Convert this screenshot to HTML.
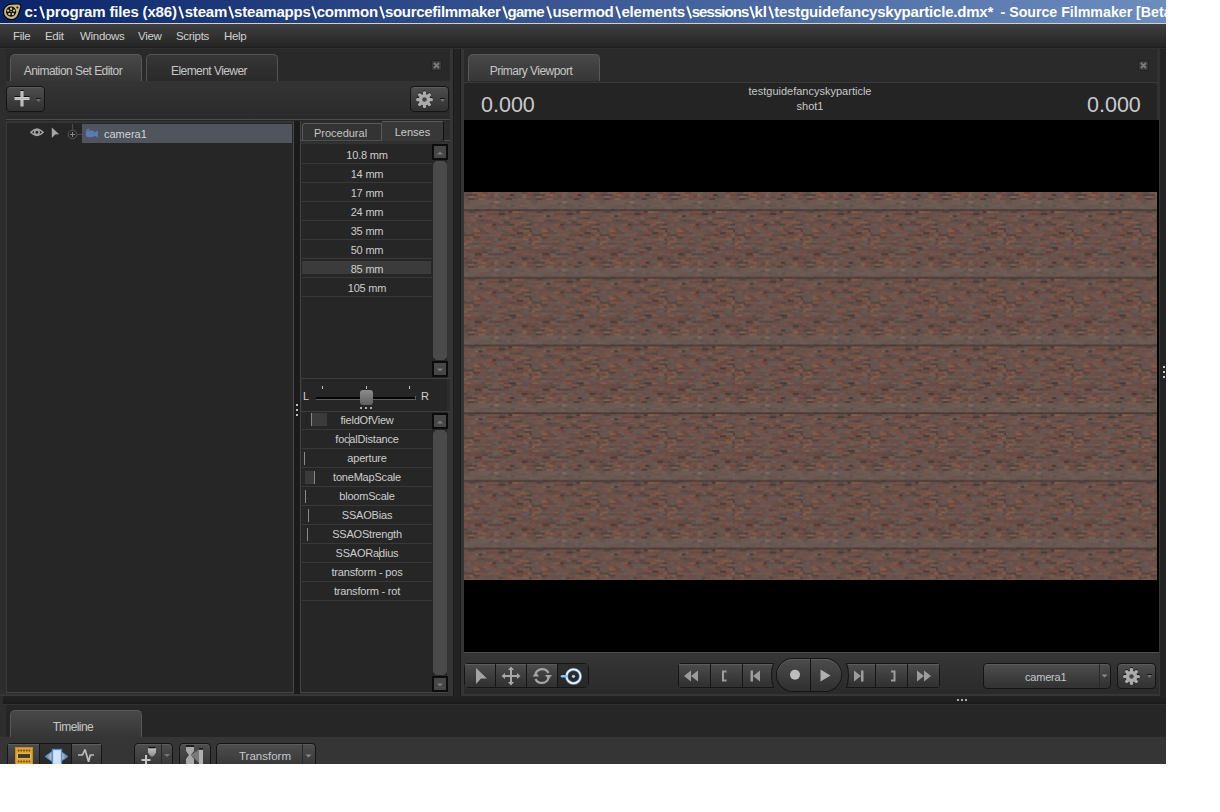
<!DOCTYPE html>
<html><head><meta charset="utf-8"><style>
*{margin:0;padding:0;box-sizing:border-box}
html,body{width:1220px;height:812px;background:#fff;overflow:hidden}
body{font-family:"Liberation Sans",sans-serif;font-size:11px;color:#c8c8c8;position:relative}
.a{position:absolute}
svg.a{overflow:visible}
#app{left:0;top:0;width:1166px;height:764px;background:#2d2d2d;overflow:hidden}
.tab{position:absolute;border-radius:5px 5px 0 0;background:linear-gradient(#484848,#363636);border:1px solid #585858;border-bottom:none;text-align:center;color:#c6c6c6;font-size:12px;letter-spacing:-0.55px;padding-top:3px;padding-right:6px}
.tab.in{background:linear-gradient(#363636,#292929);border-color:#535353}
.btn{position:absolute;border-radius:4px;background:linear-gradient(#4e4e4e,#333 90%);border:1px solid #141414;box-shadow:inset 0 1px 0 #5c5c5c}
.seg{position:absolute;background:linear-gradient(#4c4c4c,#323232 90%);box-shadow:inset 0 1px 0 #5c5c5c}
.seg.on{background:linear-gradient(#2e2e2e,#272727);box-shadow:none}
.xbtn{position:absolute;width:11px;height:11px;background:#393939;border:1px solid #222;border-radius:2px}
.sbbtn{position:absolute;width:16px;height:16px;background:#474747;border:2px solid #0c0c0c}
.thumb{position:absolute;background:#4a4a4a;clip-path:polygon(3px 0,calc(100% - 3px) 0,100% 3px,100% calc(100% - 3px),calc(100% - 3px) 100%,3px 100%,0 calc(100% - 3px),0 3px)}
.row{position:absolute;width:130px;height:19px;border-bottom:1px solid #383838;text-align:center;color:#cdcdcd;letter-spacing:-0.2px}
</style></head><body>
<div id="app" class="a">
<div class="a" style="left:0px;top:0px;width:1166px;height:23px;background:linear-gradient(to right,#0a246a 0px,#a6caf0 1840px)"></div>
<svg class="a" style="left:0px;top:0px" width="24" height="23" viewBox="0 0 24 23"><path d="M11 4.8 L18 4.6 Q20.8 4.6 20.2 7.2 L17.8 14.4 A7.1 7.1 0 1 1 11 4.8Z" fill="#000" stroke="#000" stroke-width="2.2" stroke-linejoin="round"/>
<path d="M11 4.8 L18 4.6 Q20.8 4.6 20.2 7.2 L17.8 14.4 A7.1 7.1 0 1 1 11 4.8Z" fill="#c9b57e"/>
<circle cx="11.1" cy="11.6" r="5.1" fill="#0c0c0c"/>
<g fill="#d8c488"><circle cx="11.1" cy="8.7" r="1.2"/><circle cx="8.1" cy="10.6" r="1.2"/><circle cx="14.1" cy="10.6" r="1.2"/><circle cx="9.4" cy="14" r="1.2"/><circle cx="12.9" cy="14" r="1.2"/><circle cx="11.1" cy="11.5" r="0.7"/></g>
<circle cx="17.4" cy="7.4" r="1" fill="#111"/></svg>
<div class="a" style="left:24.4px;top:3px;white-space:nowrap;font-weight:bold;font-size:15px;color:#fff;line-height:18px;letter-spacing:0.00px">c:</div>
<svg class="a" style="left:38.7px;top:0px" width="7" height="23" viewBox="0 0 7 23"><path d="M1.2 6.4 L5.2 18.4" stroke="#fff" stroke-width="1.9"/></svg>
<div class="a" style="left:45.8px;top:3px;white-space:nowrap;font-weight:bold;font-size:15px;color:#fff;line-height:18px;letter-spacing:-0.17px">program files (x86)</div>
<svg class="a" style="left:178.3px;top:0px" width="7" height="23" viewBox="0 0 7 23"><path d="M1.2 6.4 L5.2 18.4" stroke="#fff" stroke-width="1.9"/></svg>
<div class="a" style="left:184.7px;top:3px;white-space:nowrap;font-weight:bold;font-size:15px;color:#fff;line-height:18px;letter-spacing:-0.17px">steam</div>
<svg class="a" style="left:228.3px;top:0px" width="7" height="23" viewBox="0 0 7 23"><path d="M1.2 6.4 L5.2 18.4" stroke="#fff" stroke-width="1.9"/></svg>
<div class="a" style="left:234.1px;top:3px;white-space:nowrap;font-weight:bold;font-size:15px;color:#fff;line-height:18px;letter-spacing:-0.21px">steamapps</div>
<svg class="a" style="left:311.2px;top:0px" width="7" height="23" viewBox="0 0 7 23"><path d="M1.2 6.4 L5.2 18.4" stroke="#fff" stroke-width="1.9"/></svg>
<div class="a" style="left:316.7px;top:3px;white-space:nowrap;font-weight:bold;font-size:15px;color:#fff;line-height:18px;letter-spacing:-0.22px">common</div>
<svg class="a" style="left:379.0px;top:0px" width="7" height="23" viewBox="0 0 7 23"><path d="M1.2 6.4 L5.2 18.4" stroke="#fff" stroke-width="1.9"/></svg>
<div class="a" style="left:384.9px;top:3px;white-space:nowrap;font-weight:bold;font-size:15px;color:#fff;line-height:18px;letter-spacing:-0.29px">sourcefilmmaker</div>
<svg class="a" style="left:501.6px;top:0px" width="7" height="23" viewBox="0 0 7 23"><path d="M1.2 6.4 L5.2 18.4" stroke="#fff" stroke-width="1.9"/></svg>
<div class="a" style="left:507.4px;top:3px;white-space:nowrap;font-weight:bold;font-size:15px;color:#fff;line-height:18px;letter-spacing:-0.67px">game</div>
<svg class="a" style="left:545.9px;top:0px" width="7" height="23" viewBox="0 0 7 23"><path d="M1.2 6.4 L5.2 18.4" stroke="#fff" stroke-width="1.9"/></svg>
<div class="a" style="left:552.6px;top:3px;white-space:nowrap;font-weight:bold;font-size:15px;color:#fff;line-height:18px;letter-spacing:-0.39px">usermod</div>
<svg class="a" style="left:614.9px;top:0px" width="7" height="23" viewBox="0 0 7 23"><path d="M1.2 6.4 L5.2 18.4" stroke="#fff" stroke-width="1.9"/></svg>
<div class="a" style="left:621.4px;top:3px;white-space:nowrap;font-weight:bold;font-size:15px;color:#fff;line-height:18px;letter-spacing:-0.18px">elements</div>
<svg class="a" style="left:685.9px;top:0px" width="7" height="23" viewBox="0 0 7 23"><path d="M1.2 6.4 L5.2 18.4" stroke="#fff" stroke-width="1.9"/></svg>
<div class="a" style="left:691.7px;top:3px;white-space:nowrap;font-weight:bold;font-size:15px;color:#fff;line-height:18px;letter-spacing:-0.93px">sessions</div>
<svg class="a" style="left:749.1px;top:0px" width="7" height="23" viewBox="0 0 7 23"><path d="M1.2 6.4 L5.2 18.4" stroke="#fff" stroke-width="1.9"/></svg>
<div class="a" style="left:754.6px;top:3px;white-space:nowrap;font-weight:bold;font-size:15px;color:#fff;line-height:18px;letter-spacing:-0.26px">kl</div>
<svg class="a" style="left:768.1px;top:0px" width="7" height="23" viewBox="0 0 7 23"><path d="M1.2 6.4 L5.2 18.4" stroke="#fff" stroke-width="1.9"/></svg>
<div class="a" style="left:774.3px;top:3px;white-space:nowrap;font-weight:bold;font-size:15px;color:#fff;line-height:18px;letter-spacing:-0.21px">testguidefancyskyparticle.dmx*</div>
<div class="a" style="left:1000.5px;top:3px;white-space:nowrap;font-weight:bold;font-size:14.2px;color:#fff;line-height:18px">- Source Filmmaker [Beta]</div>
<div class="a" style="left:0px;top:23px;width:1166px;height:1px;background:#d4d0c8"></div>
<div class="a" style="left:0px;top:24px;width:1166px;height:23px;background:linear-gradient(#404040,#242424)"></div>
<div class="a" style="left:13px;top:29px;white-space:nowrap;color:#d0d0d0;font-size:11.5px;line-height:14px;letter-spacing:-0.3px">File</div>
<div class="a" style="left:45px;top:29px;white-space:nowrap;color:#d0d0d0;font-size:11.5px;line-height:14px;letter-spacing:-0.3px">Edit</div>
<div class="a" style="left:80px;top:29px;white-space:nowrap;color:#d0d0d0;font-size:11.5px;line-height:14px;letter-spacing:-0.3px">Windows</div>
<div class="a" style="left:138px;top:29px;white-space:nowrap;color:#d0d0d0;font-size:11.5px;line-height:14px;letter-spacing:-0.3px">View</div>
<div class="a" style="left:176px;top:29px;white-space:nowrap;color:#d0d0d0;font-size:11.5px;line-height:14px;letter-spacing:-0.3px">Scripts</div>
<div class="a" style="left:224px;top:29px;white-space:nowrap;color:#d0d0d0;font-size:11.5px;line-height:14px;letter-spacing:-0.3px">Help</div>
<div class="a" style="left:0px;top:47px;width:1166px;height:1px;background:#1d1d1d"></div>
<div class="a" style="left:0px;top:48px;width:1166px;height:1px;background:#303030"></div>
<div class="a" style="left:0px;top:49px;width:6px;height:647px;background:#2d2d2d"></div>
<div class="a" style="left:6px;top:49px;width:444px;height:32px;background:#292929"></div>
<div class="tab" style="left:10px;top:54px;width:132px;height:27px;line-height:27px">Animation Set Editor</div>
<div class="tab in" style="left:146px;top:54px;width:132px;height:27px;line-height:27px">Element Viewer</div>
<div class="xbtn" style="left:431px;top:60px"></div>
<svg class="a" style="left:431px;top:60px" width="11" height="11" viewBox="0 0 11 11"><path d="M3 3L8 8M8 3L3 8" stroke="#7c7c7c" stroke-width="1.8"/></svg>
<div class="a" style="left:6px;top:81px;width:444px;height:38px;background:linear-gradient(#343434,#2a2a2a)"></div>
<div class="btn" style="left:6px;top:86px;width:39px;height:26px"></div>
<svg class="a" style="left:13.5px;top:90px" width="16" height="17" viewBox="0 0 16 17"><defs><linearGradient id="pg" x1="0" y1="0" x2="1" y2="0"><stop offset="0" stop-color="#d8d8d8"/><stop offset="0.5" stop-color="#b0b0b0"/><stop offset="1" stop-color="#d0d0d0"/></linearGradient><linearGradient id="pg2" x1="0" y1="0" x2="0" y2="1"><stop offset="0" stop-color="#dcdcdc"/><stop offset="0.5" stop-color="#b4b4b4"/><stop offset="1" stop-color="#d4d4d4"/></linearGradient></defs><rect x="6.5" y="0" width="3" height="1" fill="#111"/><rect x="0.5" y="6" width="15" height="1" fill="#111"/><rect x="6.5" y="1" width="3" height="15.5" fill="url(#pg)"/><rect x="0.5" y="7" width="15" height="3" fill="url(#pg2)"/></svg>
<svg class="a" style="left:36px;top:97.5px" width="6" height="5" viewBox="0 0 6 5"><path d="M0 0.5H5" stroke="#151515" stroke-width="1"/><path d="M0 1H5L2.5 4Z" fill="#707070"/></svg>
<div class="btn" style="left:410px;top:86px;width:39px;height:26px"></div>
<svg class="a" style="left:410px;top:86px" width="39" height="26" viewBox="0 0 39 26"><circle cx="14.5" cy="12.799999999999999" r="5.71" fill="#141414"/><rect x="12.90" y="4.40" width="3.2" height="8.40" rx="1.3" fill="#141414" transform="rotate(0 14.5 12.799999999999999)"/><rect x="12.90" y="4.40" width="3.2" height="8.40" rx="1.3" fill="#141414" transform="rotate(45 14.5 12.799999999999999)"/><rect x="12.90" y="4.40" width="3.2" height="8.40" rx="1.3" fill="#141414" transform="rotate(90 14.5 12.799999999999999)"/><rect x="12.90" y="4.40" width="3.2" height="8.40" rx="1.3" fill="#141414" transform="rotate(135 14.5 12.799999999999999)"/><rect x="12.90" y="4.40" width="3.2" height="8.40" rx="1.3" fill="#141414" transform="rotate(180 14.5 12.799999999999999)"/><rect x="12.90" y="4.40" width="3.2" height="8.40" rx="1.3" fill="#141414" transform="rotate(225 14.5 12.799999999999999)"/><rect x="12.90" y="4.40" width="3.2" height="8.40" rx="1.3" fill="#141414" transform="rotate(270 14.5 12.799999999999999)"/><rect x="12.90" y="4.40" width="3.2" height="8.40" rx="1.3" fill="#141414" transform="rotate(315 14.5 12.799999999999999)"/><circle cx="14.5" cy="13.6" r="5.71" fill="#acacac"/><rect x="12.90" y="5.20" width="3.2" height="8.40" rx="1.3" fill="#acacac" transform="rotate(0 14.5 13.6)"/><rect x="12.90" y="5.20" width="3.2" height="8.40" rx="1.3" fill="#acacac" transform="rotate(45 14.5 13.6)"/><rect x="12.90" y="5.20" width="3.2" height="8.40" rx="1.3" fill="#acacac" transform="rotate(90 14.5 13.6)"/><rect x="12.90" y="5.20" width="3.2" height="8.40" rx="1.3" fill="#acacac" transform="rotate(135 14.5 13.6)"/><rect x="12.90" y="5.20" width="3.2" height="8.40" rx="1.3" fill="#acacac" transform="rotate(180 14.5 13.6)"/><rect x="12.90" y="5.20" width="3.2" height="8.40" rx="1.3" fill="#acacac" transform="rotate(225 14.5 13.6)"/><rect x="12.90" y="5.20" width="3.2" height="8.40" rx="1.3" fill="#acacac" transform="rotate(270 14.5 13.6)"/><rect x="12.90" y="5.20" width="3.2" height="8.40" rx="1.3" fill="#acacac" transform="rotate(315 14.5 13.6)"/><circle cx="14.5" cy="13.6" r="2.27" fill="#454545"/><path d="M30 12.5H35" stroke="#151515" stroke-width="1"/><path d="M30 13H35L32.5 16Z" fill="#707070"/></svg>
<div class="a" style="left:6px;top:119px;width:444px;height:1px;background:#4c4c4c"></div>
<div class="a" style="left:6px;top:120px;width:444px;height:1px;background:#262626"></div>
<div class="a" style="left:6px;top:121px;width:288px;height:575px;background:#2c2c2c"></div>
<div class="a" style="left:6px;top:121px;width:288px;height:572px;background:#262626;border-left:1px solid #3a3a3a;border-top:2px solid #343434;border-right:1px solid #464646;border-bottom:1px solid #454545"></div>
<div class="a" style="left:82px;top:124px;width:210px;height:19px;background:#4f545d"></div>
<div class="a" style="left:104px;top:127px;white-space:nowrap;color:#cfd3da;line-height:14px">camera1</div>
<svg class="a" style="left:30px;top:127px" width="14" height="11" viewBox="0 0 14 11"><path d="M0.9 5.3 Q7 -1.3 13.1 5.3 Q7 11.9 0.9 5.3Z" fill="none" stroke="#a6a6a6" stroke-width="1.5"/><circle cx="6.9" cy="5.3" r="2.3" fill="none" stroke="#a6a6a6" stroke-width="1.6"/></svg>
<svg class="a" style="left:51px;top:127px" width="10" height="12" viewBox="0 0 10 12"><path d="M0.8 0.6 L8.2 7.2 L4.2 7.5 L0.8 11Z" fill="#a4a4a4"/></svg>
<svg class="a" style="left:66px;top:123px" width="18" height="18" viewBox="0 0 18 18"><path d="M6.5 1V7M11 11.5H16" stroke="#4a4a4a" stroke-width="1"/><circle cx="6.5" cy="11.5" r="4.3" fill="none" stroke="#585858" stroke-width="1"/><path d="M6.5 9V14M4 11.5H9" stroke="#8a8a8a" stroke-width="1"/></svg>
<svg class="a" style="left:85px;top:128px" width="14" height="10" viewBox="0 0 14 10"><rect x="0.8" y="2.4" width="8.6" height="6.8" rx="2.6" fill="#5b79b4"/><path d="M8.6 4.8 L13 2.6 V9.4 L8.6 7.4Z" fill="#5b79b4"/><path d="M1.8 3.2 Q1.6 0.6 4.6 1.3" fill="none" stroke="#5b79b4" stroke-width="1.2"/></svg>
<div class="a" style="left:294px;top:121px;width:6px;height:575px;background:#1b1b1b"></div>
<div class="a" style="left:300px;top:121px;width:150px;height:575px;background:#2d2d2d"></div>
<div class="a" style="left:300px;top:121px;width:1px;height:575px;background:#444"></div>
<div class="a" style="left:302px;top:123px;width:80px;height:18px;background:#333;border:1px solid #595959;border-bottom:none;border-radius:3px 0 0 0;color:#c4c4c4;text-align:center;line-height:19px;padding-right:3px">Procedural</div>
<div class="a" style="left:382px;top:121px;width:62px;height:20px;background:#383838;border-top:1px solid #5a5a5a;border-right:1px solid #111;border-radius:0 3px 0 0;color:#cacaca;text-align:center;line-height:20px">Lenses</div>
<div class="a" style="left:300px;top:140px;width:82px;height:1px;background:#505050"></div>
<div class="a" style="left:444px;top:140px;width:6px;height:1px;background:#505050"></div>
<div class="a" style="left:300px;top:142px;width:150px;height:237px;background:#262626;border-left:1px solid #444;border-top:2px solid #323232;border-right:3px solid #343434"></div>
<div class="a" style="left:302px;top:261px;width:129px;height:13px;background:#3b3b3b"></div>
<div class="row" style="left:302px;top:145px;line-height:21px">10.8 mm</div>
<div class="row" style="left:302px;top:164px;line-height:21px">14 mm</div>
<div class="row" style="left:302px;top:183px;line-height:21px">17 mm</div>
<div class="row" style="left:302px;top:202px;line-height:21px">24 mm</div>
<div class="row" style="left:302px;top:221px;line-height:21px">35 mm</div>
<div class="row" style="left:302px;top:240px;line-height:21px">50 mm</div>
<div class="row" style="left:302px;top:259px;line-height:21px">85 mm</div>
<div class="row" style="left:302px;top:278px;line-height:21px">105 mm</div>
<div class="sbbtn" style="left:432px;top:144px"></div>
<svg class="a" style="left:434px;top:146px" width="12" height="12" viewBox="0 0 12 12"><path d="M3 8.5 L6 5.5 L9 8.5Z" fill="#7c7c7c"/></svg>
<div class="thumb" style="left:433px;top:161px;width:14px;height:199px"></div>
<div class="sbbtn" style="left:432px;top:361px"></div>
<svg class="a" style="left:434px;top:363px" width="12" height="12" viewBox="0 0 12 12"><path d="M3 5.5 L6 8.5 L9 5.5Z" fill="#7c7c7c"/></svg>
<div class="a" style="left:300px;top:378px;width:150px;height:1px;background:#3d3d3d"></div>
<div class="a" style="left:302px;top:379px;width:145px;height:32px;background:#262626"></div>
<div class="a" style="left:303px;top:389px;white-space:nowrap;color:#cfcfcf;line-height:14px">L</div>
<div class="a" style="left:421px;top:389px;white-space:nowrap;color:#cfcfcf;line-height:14px">R</div>
<div class="a" style="left:316px;top:397px;width:100px;height:2px;background:#050505"></div>
<div class="a" style="left:316px;top:399px;width:100px;height:1px;background:#5c5c5c"></div>
<div class="a" style="left:415px;top:396px;width:1px;height:4px;background:#5c5c5c"></div>
<div class="a" style="left:322px;top:386px;width:1px;height:3px;background:#c0c0c0"></div>
<div class="a" style="left:366px;top:386px;width:1px;height:3px;background:#c0c0c0"></div>
<div class="a" style="left:409px;top:386px;width:1px;height:3px;background:#c0c0c0"></div>
<div class="a" style="left:360px;top:390px;width:13px;height:15px;border-radius:3px;background:linear-gradient(#8c8c8c,#5f5f5f)"></div>
<div class="a" style="left:360px;top:407px;width:2px;height:2px;background:#aaa;box-shadow:5px 0 0 #aaa,10px 0 0 #aaa"></div>
<div class="a" style="left:296px;top:404px;width:2px;height:2px;background:#bcbcbc;box-shadow:0 5px 0 #bcbcbc,0 10px 0 #bcbcbc"></div>
<div class="a" style="left:456px;top:365px;width:2px;height:2px;background:#bcbcbc;box-shadow:0 5px 0 #bcbcbc,0 10px 0 #bcbcbc"></div>
<div class="a" style="left:300px;top:411px;width:150px;height:1px;background:#3d3d3d"></div>
<div class="a" style="left:300px;top:412px;width:150px;height:284px;background:#2c2c2c"></div>
<div class="a" style="left:300px;top:412px;width:150px;height:281px;background:#262626;border-left:1px solid #444;border-right:3px solid #343434;border-bottom:1px solid #454545"></div>
<div class="a" style="left:312px;top:413px;width:15px;height:13px;background:#3b3b3b"></div>
<div class="a" style="left:311px;top:413px;width:1px;height:13px;background:#888"></div>
<div class="a" style="left:305px;top:471px;width:10px;height:13px;background:#3b3b3b"></div>
<div class="a" style="left:314px;top:471px;width:1px;height:13px;background:#888"></div>
<div class="a" style="left:349px;top:433px;width:1px;height:13px;background:#8a8a8a"></div>
<div class="a" style="left:304px;top:452px;width:1px;height:13px;background:#8a8a8a"></div>
<div class="a" style="left:305px;top:490px;width:1px;height:13px;background:#8a8a8a"></div>
<div class="a" style="left:308px;top:509px;width:1px;height:13px;background:#8a8a8a"></div>
<div class="a" style="left:307px;top:528px;width:1px;height:13px;background:#8a8a8a"></div>
<div class="a" style="left:379px;top:547px;width:1px;height:13px;background:#8a8a8a"></div>
<div class="row" style="left:302px;top:411px;line-height:18px">fieldOfView</div>
<div class="row" style="left:302px;top:430px;line-height:18px">focalDistance</div>
<div class="row" style="left:302px;top:449px;line-height:18px">aperture</div>
<div class="row" style="left:302px;top:468px;line-height:18px">toneMapScale</div>
<div class="row" style="left:302px;top:487px;line-height:18px">bloomScale</div>
<div class="row" style="left:302px;top:506px;line-height:18px">SSAOBias</div>
<div class="row" style="left:302px;top:525px;line-height:18px">SSAOStrength</div>
<div class="row" style="left:302px;top:544px;line-height:18px">SSAORadius</div>
<div class="row" style="left:302px;top:563px;line-height:18px">transform - pos</div>
<div class="row" style="left:302px;top:582px;line-height:18px">transform - rot</div>
<div class="sbbtn" style="left:432px;top:413px"></div>
<svg class="a" style="left:434px;top:415px" width="12" height="12" viewBox="0 0 12 12"><path d="M3 8.5 L6 5.5 L9 8.5Z" fill="#7c7c7c"/></svg>
<div class="thumb" style="left:433px;top:430px;width:14px;height:245px"></div>
<div class="sbbtn" style="left:432px;top:676px"></div>
<svg class="a" style="left:434px;top:678px" width="12" height="12" viewBox="0 0 12 12"><path d="M3 5.5 L6 8.5 L9 5.5Z" fill="#7c7c7c"/></svg>
<div class="a" style="left:450px;top:49px;width:3px;height:647px;background:#353535"></div>
<div class="a" style="left:453px;top:49px;width:8px;height:647px;background:#232323;border-left:1px solid #1a1a1a;border-right:1px solid #1a1a1a"></div>
<div class="a" style="left:461px;top:49px;width:699px;height:647px;background:#2a2a2a"></div>
<div class="a" style="left:461px;top:49px;width:3px;height:647px;background:#353535"></div>
<div class="tab" style="left:468px;top:54px;width:132px;height:27px;line-height:27px">Primary Viewport</div>
<div class="xbtn" style="left:1138px;top:60px"></div>
<svg class="a" style="left:1138px;top:60px" width="11" height="11" viewBox="0 0 11 11"><path d="M3 3L8 8M8 3L3 8" stroke="#7c7c7c" stroke-width="1.8"/></svg>
<div class="a" style="left:464px;top:82px;width:693px;height:1px;background:#3a3a3a"></div>
<div class="a" style="left:464px;top:83px;width:693px;height:37px;background:#242424;border-radius:5px 5px 0 0"></div>
<div class="a" style="left:481px;top:93px;white-space:nowrap;font-size:21.5px;line-height:25px;color:#cbcbcb">0.000</div>
<div class="a" style="left:1087px;top:93px;white-space:nowrap;font-size:21.5px;line-height:25px;color:#cbcbcb">0.000</div>
<div class="a" style="left:660px;top:84px;width:300px;text-align:center;line-height:15px;color:#c8c8c8">testguidefancyskyparticle<br>shot1</div>
<div class="a" style="left:464px;top:120px;width:695px;height:532px;background:#000"></div>
<svg class="a" style="left:464px;top:192px" width="693" height="388"><defs><pattern id="br" patternUnits="userSpaceOnUse" x="0" y="0" width="67.75" height="67.7"><rect width="67.75" height="67.7" fill="#664f48"/><rect x="3.0" y="0.00" width="4.9" height="1.82" fill="#5e4b47"/><rect x="8.4" y="0.00" width="3.8" height="1.82" fill="#705d55"/><rect x="12.6" y="0.00" width="5.5" height="1.82" fill="#7f5749"/><rect x="18.7" y="0.00" width="4.8" height="1.82" fill="#71453b"/><rect x="24.0" y="0.00" width="6.2" height="1.82" fill="#775248"/><rect x="30.7" y="0.00" width="5.4" height="1.82" fill="#705d55"/><rect x="36.6" y="0.00" width="5.6" height="1.82" fill="#68544e"/><rect x="42.7" y="0.00" width="5.5" height="1.82" fill="#775248"/><rect x="48.7" y="0.00" width="3.2" height="1.82" fill="#68544e"/><rect x="52.4" y="0.00" width="5.4" height="1.82" fill="#645a56"/><rect x="58.3" y="0.00" width="4.8" height="1.82" fill="#71453b"/><rect x="63.6" y="0.00" width="3.9" height="1.82" fill="#775248"/><rect x="-4.0" y="2.12" width="4.8" height="1.82" fill="#71453b"/><rect x="1.4" y="2.12" width="7.0" height="1.82" fill="#51423d"/><rect x="8.8" y="2.12" width="4.3" height="1.82" fill="#51423d"/><rect x="13.6" y="2.12" width="3.1" height="1.82" fill="#7f5749"/><rect x="17.2" y="2.12" width="4.6" height="1.82" fill="#84604d"/><rect x="22.3" y="2.12" width="3.3" height="1.82" fill="#775248"/><rect x="30.4" y="2.12" width="3.2" height="1.82" fill="#84604d"/><rect x="34.1" y="2.12" width="4.7" height="1.82" fill="#68544e"/><rect x="39.3" y="2.12" width="6.1" height="1.82" fill="#775248"/><rect x="45.9" y="2.12" width="4.2" height="1.82" fill="#463834"/><rect x="50.7" y="2.12" width="6.0" height="1.82" fill="#68544e"/><rect x="57.2" y="2.12" width="5.8" height="1.82" fill="#705d55"/><rect x="63.5" y="2.12" width="6.2" height="1.82" fill="#71453b"/><rect x="4.4" y="4.23" width="6.1" height="1.82" fill="#84604d"/><rect x="11.0" y="4.23" width="3.5" height="1.82" fill="#68544e"/><rect x="18.5" y="4.23" width="6.9" height="1.82" fill="#775248"/><rect x="25.9" y="4.23" width="3.8" height="1.82" fill="#5e4b47"/><rect x="30.2" y="4.23" width="5.6" height="1.82" fill="#7f5749"/><rect x="36.3" y="4.23" width="3.9" height="1.82" fill="#5e4b47"/><rect x="40.6" y="4.23" width="4.3" height="1.82" fill="#775248"/><rect x="45.4" y="4.23" width="3.3" height="1.82" fill="#68544e"/><rect x="49.2" y="4.23" width="3.1" height="1.82" fill="#5e4b47"/><rect x="58.1" y="4.23" width="4.9" height="1.82" fill="#84604d"/><rect x="63.5" y="4.23" width="3.7" height="1.82" fill="#68544e"/><rect x="-4.9" y="6.35" width="4.0" height="1.82" fill="#71453b"/><rect x="3.9" y="6.35" width="6.5" height="1.82" fill="#463834"/><rect x="10.9" y="6.35" width="3.2" height="1.82" fill="#71453b"/><rect x="14.6" y="6.35" width="6.9" height="1.82" fill="#84604d"/><rect x="21.9" y="6.35" width="4.0" height="1.82" fill="#5e4b47"/><rect x="26.5" y="6.35" width="5.0" height="1.82" fill="#775248"/><rect x="31.9" y="6.35" width="3.5" height="1.82" fill="#5e4b47"/><rect x="35.9" y="6.35" width="5.5" height="1.82" fill="#68544e"/><rect x="41.9" y="6.35" width="6.0" height="1.82" fill="#463834"/><rect x="48.4" y="6.35" width="4.8" height="1.82" fill="#68544e"/><rect x="53.7" y="6.35" width="4.1" height="1.82" fill="#7f5749"/><rect x="58.3" y="6.35" width="3.4" height="1.82" fill="#705d55"/><rect x="62.2" y="6.35" width="6.9" height="1.82" fill="#71453b"/><rect x="-3.5" y="8.46" width="3.6" height="1.82" fill="#775248"/><rect x="0.6" y="8.46" width="4.9" height="1.82" fill="#51423d"/><rect x="6.0" y="8.46" width="6.9" height="1.82" fill="#775248"/><rect x="13.3" y="8.46" width="4.9" height="1.82" fill="#645a56"/><rect x="18.7" y="8.46" width="3.5" height="1.82" fill="#705d55"/><rect x="22.8" y="8.46" width="5.2" height="1.82" fill="#7f5749"/><rect x="35.1" y="8.46" width="4.4" height="1.82" fill="#775248"/><rect x="40.0" y="8.46" width="6.5" height="1.82" fill="#775248"/><rect x="47.0" y="8.46" width="6.5" height="1.82" fill="#5e4b47"/><rect x="54.0" y="8.46" width="5.6" height="1.82" fill="#775248"/><rect x="60.1" y="8.46" width="5.4" height="1.82" fill="#7f5749"/><rect x="-4.4" y="10.58" width="4.6" height="1.82" fill="#5e4b47"/><rect x="0.7" y="10.58" width="4.8" height="1.82" fill="#71453b"/><rect x="6.0" y="10.58" width="3.3" height="1.82" fill="#775248"/><rect x="9.9" y="10.58" width="4.2" height="1.82" fill="#775248"/><rect x="14.6" y="10.58" width="3.9" height="1.82" fill="#705d55"/><rect x="19.0" y="10.58" width="6.1" height="1.82" fill="#705d55"/><rect x="25.6" y="10.58" width="4.0" height="1.82" fill="#51423d"/><rect x="30.2" y="10.58" width="3.6" height="1.82" fill="#71453b"/><rect x="38.4" y="10.58" width="5.6" height="1.82" fill="#68544e"/><rect x="44.5" y="10.58" width="4.3" height="1.82" fill="#68544e"/><rect x="49.4" y="10.58" width="5.5" height="1.82" fill="#68544e"/><rect x="55.4" y="10.58" width="6.5" height="1.82" fill="#5e4b47"/><rect x="62.4" y="10.58" width="6.7" height="1.82" fill="#7f5749"/><rect x="-3.0" y="12.69" width="6.3" height="1.82" fill="#775248"/><rect x="3.9" y="12.69" width="6.8" height="1.82" fill="#68544e"/><rect x="11.2" y="12.69" width="3.5" height="1.82" fill="#68544e"/><rect x="15.1" y="12.69" width="6.3" height="1.82" fill="#71453b"/><rect x="21.9" y="12.69" width="5.0" height="1.82" fill="#5e4b47"/><rect x="27.4" y="12.69" width="4.8" height="1.82" fill="#775248"/><rect x="32.7" y="12.69" width="4.1" height="1.82" fill="#51423d"/><rect x="37.3" y="12.69" width="5.3" height="1.82" fill="#5e4b47"/><rect x="43.1" y="12.69" width="3.1" height="1.82" fill="#705d55"/><rect x="46.7" y="12.69" width="3.8" height="1.82" fill="#51423d"/><rect x="51.0" y="12.69" width="3.9" height="1.82" fill="#775248"/><rect x="55.4" y="12.69" width="6.9" height="1.82" fill="#7f5749"/><rect x="62.8" y="12.69" width="5.5" height="1.82" fill="#645a56"/><rect x="-5.8" y="14.81" width="5.7" height="1.82" fill="#705d55"/><rect x="0.5" y="14.81" width="4.0" height="1.82" fill="#705d55"/><rect x="5.0" y="14.81" width="5.1" height="1.82" fill="#68544e"/><rect x="10.7" y="14.81" width="4.1" height="1.82" fill="#71453b"/><rect x="20.7" y="14.81" width="3.6" height="1.82" fill="#68544e"/><rect x="28.7" y="14.81" width="5.9" height="1.82" fill="#705d55"/><rect x="39.4" y="14.81" width="3.0" height="1.82" fill="#71453b"/><rect x="49.6" y="14.81" width="4.9" height="1.82" fill="#68544e"/><rect x="65.6" y="14.81" width="3.5" height="1.82" fill="#84604d"/><rect x="-5.9" y="16.93" width="6.9" height="1.82" fill="#645a56"/><rect x="1.5" y="16.93" width="4.0" height="1.82" fill="#775248"/><rect x="6.1" y="16.93" width="4.4" height="1.82" fill="#705d55"/><rect x="11.0" y="16.93" width="4.4" height="1.82" fill="#51423d"/><rect x="15.8" y="16.93" width="4.9" height="1.82" fill="#775248"/><rect x="21.3" y="16.93" width="4.7" height="1.82" fill="#71453b"/><rect x="26.5" y="16.93" width="4.3" height="1.82" fill="#7f5749"/><rect x="36.7" y="16.93" width="6.6" height="1.82" fill="#705d55"/><rect x="43.8" y="16.93" width="6.8" height="1.82" fill="#775248"/><rect x="51.1" y="16.93" width="6.0" height="1.82" fill="#71453b"/><rect x="57.6" y="16.93" width="4.2" height="1.82" fill="#68544e"/><rect x="62.3" y="16.93" width="5.1" height="1.82" fill="#71453b"/><rect x="4.6" y="19.04" width="6.5" height="1.82" fill="#51423d"/><rect x="18.5" y="19.04" width="5.1" height="1.82" fill="#68544e"/><rect x="24.1" y="19.04" width="4.6" height="1.82" fill="#775248"/><rect x="29.3" y="19.04" width="5.4" height="1.82" fill="#775248"/><rect x="35.2" y="19.04" width="5.1" height="1.82" fill="#5e4b47"/><rect x="40.8" y="19.04" width="3.5" height="1.82" fill="#68544e"/><rect x="44.7" y="19.04" width="3.3" height="1.82" fill="#463834"/><rect x="48.5" y="19.04" width="6.7" height="1.82" fill="#84604d"/><rect x="55.7" y="19.04" width="4.1" height="1.82" fill="#7f5749"/><rect x="-3.1" y="21.16" width="3.4" height="1.82" fill="#775248"/><rect x="0.8" y="21.16" width="6.7" height="1.82" fill="#775248"/><rect x="8.0" y="21.16" width="3.1" height="1.82" fill="#775248"/><rect x="11.6" y="21.16" width="5.7" height="1.82" fill="#645a56"/><rect x="17.9" y="21.16" width="4.0" height="1.82" fill="#705d55"/><rect x="22.4" y="21.16" width="5.9" height="1.82" fill="#71453b"/><rect x="28.8" y="21.16" width="5.5" height="1.82" fill="#71453b"/><rect x="34.8" y="21.16" width="6.5" height="1.82" fill="#463834"/><rect x="41.8" y="21.16" width="6.3" height="1.82" fill="#71453b"/><rect x="48.6" y="21.16" width="3.8" height="1.82" fill="#68544e"/><rect x="64.5" y="21.16" width="3.9" height="1.82" fill="#645a56"/><rect x="-5.4" y="23.27" width="4.3" height="1.82" fill="#68544e"/><rect x="3.7" y="23.27" width="6.6" height="1.82" fill="#68544e"/><rect x="10.8" y="23.27" width="3.5" height="1.82" fill="#84604d"/><rect x="14.8" y="23.27" width="3.4" height="1.82" fill="#463834"/><rect x="18.7" y="23.27" width="5.2" height="1.82" fill="#68544e"/><rect x="24.4" y="23.27" width="4.6" height="1.82" fill="#775248"/><rect x="29.5" y="23.27" width="3.4" height="1.82" fill="#645a56"/><rect x="40.5" y="23.27" width="3.5" height="1.82" fill="#645a56"/><rect x="44.5" y="23.27" width="5.0" height="1.82" fill="#68544e"/><rect x="50.0" y="23.27" width="6.2" height="1.82" fill="#775248"/><rect x="56.7" y="23.27" width="3.1" height="1.82" fill="#71453b"/><rect x="60.3" y="23.27" width="6.6" height="1.82" fill="#68544e"/><rect x="67.5" y="23.27" width="3.7" height="1.82" fill="#68544e"/><rect x="-5.9" y="25.39" width="6.7" height="1.82" fill="#775248"/><rect x="1.3" y="25.39" width="3.5" height="1.82" fill="#775248"/><rect x="5.3" y="25.39" width="6.1" height="1.82" fill="#705d55"/><rect x="11.9" y="25.39" width="4.7" height="1.82" fill="#68544e"/><rect x="17.1" y="25.39" width="5.4" height="1.82" fill="#775248"/><rect x="23.0" y="25.39" width="6.4" height="1.82" fill="#705d55"/><rect x="29.8" y="25.39" width="4.4" height="1.82" fill="#68544e"/><rect x="34.8" y="25.39" width="5.4" height="1.82" fill="#775248"/><rect x="40.7" y="25.39" width="4.3" height="1.82" fill="#84604d"/><rect x="45.5" y="25.39" width="5.3" height="1.82" fill="#5e4b47"/><rect x="51.3" y="25.39" width="6.9" height="1.82" fill="#51423d"/><rect x="58.7" y="25.39" width="4.1" height="1.82" fill="#68544e"/><rect x="63.3" y="25.39" width="6.3" height="1.82" fill="#645a56"/><rect x="-5.3" y="27.50" width="5.8" height="1.82" fill="#68544e"/><rect x="1.0" y="27.50" width="4.6" height="1.82" fill="#775248"/><rect x="6.1" y="27.50" width="6.2" height="1.82" fill="#7f5749"/><rect x="12.8" y="27.50" width="3.0" height="1.82" fill="#5e4b47"/><rect x="16.4" y="27.50" width="3.2" height="1.82" fill="#51423d"/><rect x="20.1" y="27.50" width="4.4" height="1.82" fill="#5e4b47"/><rect x="24.9" y="27.50" width="3.7" height="1.82" fill="#71453b"/><rect x="29.1" y="27.50" width="7.0" height="1.82" fill="#7f5749"/><rect x="43.2" y="27.50" width="3.1" height="1.82" fill="#68544e"/><rect x="46.8" y="27.50" width="4.0" height="1.82" fill="#775248"/><rect x="51.3" y="27.50" width="6.0" height="1.82" fill="#775248"/><rect x="57.8" y="27.50" width="3.4" height="1.82" fill="#645a56"/><rect x="61.7" y="27.50" width="5.2" height="1.82" fill="#71453b"/><rect x="-3.8" y="29.62" width="6.2" height="1.82" fill="#5e4b47"/><rect x="19.2" y="29.62" width="6.4" height="1.82" fill="#5e4b47"/><rect x="29.8" y="29.62" width="4.7" height="1.82" fill="#5e4b47"/><rect x="35.0" y="29.62" width="4.2" height="1.82" fill="#705d55"/><rect x="39.8" y="29.62" width="5.6" height="1.82" fill="#51423d"/><rect x="45.9" y="29.62" width="5.7" height="1.82" fill="#775248"/><rect x="52.0" y="29.62" width="3.1" height="1.82" fill="#775248"/><rect x="55.6" y="29.62" width="5.5" height="1.82" fill="#84604d"/><rect x="61.6" y="29.62" width="3.2" height="1.82" fill="#84604d"/><rect x="-1.9" y="31.73" width="4.7" height="1.82" fill="#68544e"/><rect x="3.3" y="31.73" width="3.2" height="1.82" fill="#705d55"/><rect x="11.1" y="31.73" width="4.0" height="1.82" fill="#775248"/><rect x="15.6" y="31.73" width="5.5" height="1.82" fill="#68544e"/><rect x="21.6" y="31.73" width="6.4" height="1.82" fill="#7f5749"/><rect x="28.5" y="31.73" width="3.5" height="1.82" fill="#463834"/><rect x="32.5" y="31.73" width="4.8" height="1.82" fill="#5e4b47"/><rect x="37.8" y="31.73" width="5.7" height="1.82" fill="#71453b"/><rect x="44.1" y="31.73" width="6.3" height="1.82" fill="#51423d"/><rect x="50.8" y="31.73" width="5.9" height="1.82" fill="#7f5749"/><rect x="57.3" y="31.73" width="5.0" height="1.82" fill="#71453b"/><rect x="62.8" y="31.73" width="5.5" height="1.82" fill="#51423d"/><rect x="-3.7" y="33.85" width="5.9" height="1.82" fill="#68544e"/><rect x="2.7" y="33.85" width="5.5" height="1.82" fill="#68544e"/><rect x="8.8" y="33.85" width="6.8" height="1.82" fill="#68544e"/><rect x="16.1" y="33.85" width="6.5" height="1.82" fill="#775248"/><rect x="23.1" y="33.85" width="3.0" height="1.82" fill="#775248"/><rect x="26.6" y="33.85" width="5.5" height="1.82" fill="#71453b"/><rect x="32.6" y="33.85" width="4.1" height="1.82" fill="#68544e"/><rect x="37.2" y="33.85" width="5.2" height="1.82" fill="#645a56"/><rect x="42.9" y="33.85" width="4.9" height="1.82" fill="#645a56"/><rect x="48.4" y="33.85" width="4.4" height="1.82" fill="#775248"/><rect x="53.3" y="33.85" width="6.2" height="1.82" fill="#5e4b47"/><rect x="60.0" y="33.85" width="6.4" height="1.82" fill="#705d55"/><rect x="66.8" y="33.85" width="4.7" height="1.82" fill="#7f5749"/><rect x="3.9" y="35.97" width="4.3" height="1.82" fill="#68544e"/><rect x="8.7" y="35.97" width="4.7" height="1.82" fill="#7f5749"/><rect x="13.9" y="35.97" width="4.8" height="1.82" fill="#71453b"/><rect x="19.3" y="35.97" width="3.3" height="1.82" fill="#705d55"/><rect x="23.1" y="35.97" width="6.3" height="1.82" fill="#775248"/><rect x="29.9" y="35.97" width="3.3" height="1.82" fill="#5e4b47"/><rect x="33.7" y="35.97" width="3.3" height="1.82" fill="#645a56"/><rect x="37.5" y="35.97" width="4.1" height="1.82" fill="#645a56"/><rect x="42.1" y="35.97" width="5.6" height="1.82" fill="#7f5749"/><rect x="48.2" y="35.97" width="4.3" height="1.82" fill="#5e4b47"/><rect x="60.2" y="35.97" width="6.7" height="1.82" fill="#51423d"/><rect x="67.4" y="35.97" width="4.8" height="1.82" fill="#71453b"/><rect x="-1.5" y="38.08" width="4.4" height="1.82" fill="#645a56"/><rect x="3.5" y="38.08" width="5.7" height="1.82" fill="#68544e"/><rect x="9.7" y="38.08" width="6.0" height="1.82" fill="#84604d"/><rect x="16.1" y="38.08" width="5.2" height="1.82" fill="#5e4b47"/><rect x="21.8" y="38.08" width="3.7" height="1.82" fill="#705d55"/><rect x="26.0" y="38.08" width="6.5" height="1.82" fill="#775248"/><rect x="33.0" y="38.08" width="3.9" height="1.82" fill="#68544e"/><rect x="43.2" y="38.08" width="5.6" height="1.82" fill="#775248"/><rect x="49.3" y="38.08" width="5.3" height="1.82" fill="#71453b"/><rect x="55.1" y="38.08" width="3.3" height="1.82" fill="#7f5749"/><rect x="58.9" y="38.08" width="6.6" height="1.82" fill="#7f5749"/><rect x="66.0" y="38.08" width="3.4" height="1.82" fill="#463834"/><rect x="-1.5" y="40.20" width="3.9" height="1.82" fill="#71453b"/><rect x="2.9" y="40.20" width="4.4" height="1.82" fill="#645a56"/><rect x="12.6" y="40.20" width="5.7" height="1.82" fill="#71453b"/><rect x="18.8" y="40.20" width="6.2" height="1.82" fill="#5e4b47"/><rect x="25.5" y="40.20" width="6.7" height="1.82" fill="#645a56"/><rect x="32.7" y="40.20" width="6.4" height="1.82" fill="#775248"/><rect x="46.7" y="40.20" width="5.6" height="1.82" fill="#775248"/><rect x="52.7" y="40.20" width="6.2" height="1.82" fill="#463834"/><rect x="59.4" y="40.20" width="6.7" height="1.82" fill="#68544e"/><rect x="66.6" y="40.20" width="7.0" height="1.82" fill="#68544e"/><rect x="-1.9" y="42.31" width="4.6" height="1.82" fill="#51423d"/><rect x="3.1" y="42.31" width="6.9" height="1.82" fill="#51423d"/><rect x="10.5" y="42.31" width="5.9" height="1.82" fill="#7f5749"/><rect x="16.9" y="42.31" width="6.1" height="1.82" fill="#775248"/><rect x="23.5" y="42.31" width="6.0" height="1.82" fill="#705d55"/><rect x="30.1" y="42.31" width="6.6" height="1.82" fill="#7f5749"/><rect x="37.2" y="42.31" width="3.8" height="1.82" fill="#5e4b47"/><rect x="41.5" y="42.31" width="3.9" height="1.82" fill="#5e4b47"/><rect x="45.9" y="42.31" width="5.0" height="1.82" fill="#51423d"/><rect x="56.6" y="42.31" width="6.7" height="1.82" fill="#71453b"/><rect x="63.8" y="42.31" width="4.9" height="1.82" fill="#84604d"/><rect x="-5.5" y="44.43" width="4.4" height="1.82" fill="#775248"/><rect x="-0.6" y="44.43" width="4.9" height="1.82" fill="#775248"/><rect x="4.8" y="44.43" width="3.9" height="1.82" fill="#84604d"/><rect x="9.2" y="44.43" width="6.9" height="1.82" fill="#51423d"/><rect x="16.6" y="44.43" width="6.2" height="1.82" fill="#68544e"/><rect x="30.3" y="44.43" width="6.6" height="1.82" fill="#68544e"/><rect x="37.4" y="44.43" width="5.9" height="1.82" fill="#68544e"/><rect x="43.8" y="44.43" width="4.7" height="1.82" fill="#7f5749"/><rect x="53.5" y="44.43" width="5.1" height="1.82" fill="#5e4b47"/><rect x="59.0" y="44.43" width="4.1" height="1.82" fill="#7f5749"/><rect x="63.6" y="44.43" width="5.3" height="1.82" fill="#68544e"/><rect x="-4.9" y="46.54" width="6.4" height="1.82" fill="#775248"/><rect x="2.0" y="46.54" width="4.4" height="1.82" fill="#71453b"/><rect x="6.9" y="46.54" width="3.4" height="1.82" fill="#705d55"/><rect x="10.8" y="46.54" width="3.3" height="1.82" fill="#71453b"/><rect x="14.6" y="46.54" width="6.4" height="1.82" fill="#68544e"/><rect x="26.7" y="46.54" width="3.4" height="1.82" fill="#68544e"/><rect x="30.5" y="46.54" width="3.1" height="1.82" fill="#705d55"/><rect x="34.2" y="46.54" width="3.6" height="1.82" fill="#51423d"/><rect x="38.3" y="46.54" width="4.3" height="1.82" fill="#71453b"/><rect x="43.1" y="46.54" width="4.2" height="1.82" fill="#775248"/><rect x="47.8" y="46.54" width="4.4" height="1.82" fill="#7f5749"/><rect x="52.7" y="46.54" width="5.7" height="1.82" fill="#7f5749"/><rect x="58.9" y="46.54" width="5.6" height="1.82" fill="#84604d"/><rect x="65.0" y="46.54" width="5.8" height="1.82" fill="#51423d"/><rect x="-3.4" y="48.66" width="4.8" height="1.82" fill="#68544e"/><rect x="1.9" y="48.66" width="6.6" height="1.82" fill="#84604d"/><rect x="9.1" y="48.66" width="6.7" height="1.82" fill="#645a56"/><rect x="16.3" y="48.66" width="6.0" height="1.82" fill="#775248"/><rect x="22.8" y="48.66" width="4.0" height="1.82" fill="#7f5749"/><rect x="32.2" y="48.66" width="5.3" height="1.82" fill="#645a56"/><rect x="37.9" y="48.66" width="4.8" height="1.82" fill="#7f5749"/><rect x="43.2" y="48.66" width="3.6" height="1.82" fill="#68544e"/><rect x="47.3" y="48.66" width="3.7" height="1.82" fill="#705d55"/><rect x="51.5" y="48.66" width="5.4" height="1.82" fill="#68544e"/><rect x="61.0" y="48.66" width="4.7" height="1.82" fill="#645a56"/><rect x="66.2" y="48.66" width="6.7" height="1.82" fill="#71453b"/><rect x="-0.8" y="50.78" width="3.8" height="1.82" fill="#84604d"/><rect x="8.9" y="50.78" width="5.5" height="1.82" fill="#5e4b47"/><rect x="21.2" y="50.78" width="6.2" height="1.82" fill="#5e4b47"/><rect x="27.9" y="50.78" width="5.1" height="1.82" fill="#68544e"/><rect x="33.5" y="50.78" width="4.4" height="1.82" fill="#7f5749"/><rect x="38.4" y="50.78" width="5.2" height="1.82" fill="#645a56"/><rect x="44.1" y="50.78" width="6.2" height="1.82" fill="#5e4b47"/><rect x="50.7" y="50.78" width="5.9" height="1.82" fill="#71453b"/><rect x="57.1" y="50.78" width="6.6" height="1.82" fill="#645a56"/><rect x="64.2" y="50.78" width="5.4" height="1.82" fill="#5e4b47"/><rect x="-4.3" y="52.89" width="6.9" height="1.82" fill="#68544e"/><rect x="3.2" y="52.89" width="5.3" height="1.82" fill="#68544e"/><rect x="8.9" y="52.89" width="6.1" height="1.82" fill="#705d55"/><rect x="15.5" y="52.89" width="5.3" height="1.82" fill="#645a56"/><rect x="29.8" y="52.89" width="4.8" height="1.82" fill="#68544e"/><rect x="35.1" y="52.89" width="6.6" height="1.82" fill="#71453b"/><rect x="46.0" y="52.89" width="3.7" height="1.82" fill="#645a56"/><rect x="50.1" y="52.89" width="5.4" height="1.82" fill="#775248"/><rect x="60.7" y="52.89" width="4.0" height="1.82" fill="#68544e"/><rect x="65.2" y="52.89" width="3.7" height="1.82" fill="#775248"/><rect x="-2.7" y="55.01" width="4.6" height="1.82" fill="#7f5749"/><rect x="2.4" y="55.01" width="4.2" height="1.82" fill="#84604d"/><rect x="7.1" y="55.01" width="5.5" height="1.82" fill="#775248"/><rect x="13.1" y="55.01" width="3.6" height="1.82" fill="#775248"/><rect x="17.2" y="55.01" width="3.6" height="1.82" fill="#5e4b47"/><rect x="21.3" y="55.01" width="4.6" height="1.82" fill="#7f5749"/><rect x="26.4" y="55.01" width="4.1" height="1.82" fill="#645a56"/><rect x="31.0" y="55.01" width="3.2" height="1.82" fill="#7f5749"/><rect x="34.7" y="55.01" width="4.6" height="1.82" fill="#7f5749"/><rect x="39.8" y="55.01" width="4.9" height="1.82" fill="#5e4b47"/><rect x="45.2" y="55.01" width="6.7" height="1.82" fill="#463834"/><rect x="52.3" y="55.01" width="6.0" height="1.82" fill="#705d55"/><rect x="65.7" y="55.01" width="4.6" height="1.82" fill="#5e4b47"/><rect x="-0.7" y="57.12" width="6.8" height="1.82" fill="#71453b"/><rect x="11.8" y="57.12" width="4.3" height="1.82" fill="#5e4b47"/><rect x="16.6" y="57.12" width="6.6" height="1.82" fill="#5e4b47"/><rect x="23.7" y="57.12" width="4.3" height="1.82" fill="#5e4b47"/><rect x="28.5" y="57.12" width="6.5" height="1.82" fill="#705d55"/><rect x="39.9" y="57.12" width="6.9" height="1.82" fill="#7f5749"/><rect x="47.3" y="57.12" width="5.1" height="1.82" fill="#51423d"/><rect x="-2.2" y="59.24" width="5.2" height="1.82" fill="#68544e"/><rect x="3.5" y="59.24" width="3.9" height="1.82" fill="#5e4b47"/><rect x="7.9" y="59.24" width="3.5" height="1.82" fill="#71453b"/><rect x="11.8" y="59.24" width="6.2" height="1.82" fill="#71453b"/><rect x="18.5" y="59.24" width="5.3" height="1.82" fill="#51423d"/><rect x="24.3" y="59.24" width="4.0" height="1.82" fill="#645a56"/><rect x="28.8" y="59.24" width="3.7" height="1.82" fill="#705d55"/><rect x="33.0" y="59.24" width="6.3" height="1.82" fill="#645a56"/><rect x="39.7" y="59.24" width="5.8" height="1.82" fill="#51423d"/><rect x="49.6" y="59.24" width="4.2" height="1.82" fill="#705d55"/><rect x="54.4" y="59.24" width="6.5" height="1.82" fill="#775248"/><rect x="61.4" y="59.24" width="3.8" height="1.82" fill="#645a56"/><rect x="65.7" y="59.24" width="6.6" height="1.82" fill="#71453b"/><rect x="-1.2" y="61.35" width="5.5" height="1.82" fill="#775248"/><rect x="4.8" y="61.35" width="5.6" height="1.82" fill="#645a56"/><rect x="10.9" y="61.35" width="6.8" height="1.82" fill="#463834"/><rect x="18.3" y="61.35" width="5.9" height="1.82" fill="#705d55"/><rect x="24.6" y="61.35" width="4.7" height="1.82" fill="#51423d"/><rect x="29.8" y="61.35" width="3.5" height="1.82" fill="#51423d"/><rect x="33.8" y="61.35" width="3.7" height="1.82" fill="#51423d"/><rect x="38.0" y="61.35" width="6.2" height="1.82" fill="#71453b"/><rect x="44.6" y="61.35" width="6.5" height="1.82" fill="#68544e"/><rect x="59.1" y="61.35" width="3.7" height="1.82" fill="#7f5749"/><rect x="63.3" y="61.35" width="5.6" height="1.82" fill="#775248"/><rect x="-2.6" y="63.47" width="5.1" height="1.82" fill="#775248"/><rect x="3.0" y="63.47" width="3.0" height="1.82" fill="#71453b"/><rect x="6.5" y="63.47" width="4.0" height="1.82" fill="#775248"/><rect x="15.2" y="63.47" width="3.8" height="1.82" fill="#71453b"/><rect x="19.4" y="63.47" width="3.1" height="1.82" fill="#7f5749"/><rect x="23.0" y="63.47" width="7.0" height="1.82" fill="#705d55"/><rect x="30.5" y="63.47" width="6.7" height="1.82" fill="#775248"/><rect x="37.7" y="63.47" width="6.7" height="1.82" fill="#68544e"/><rect x="44.9" y="63.47" width="3.3" height="1.82" fill="#645a56"/><rect x="48.6" y="63.47" width="4.3" height="1.82" fill="#775248"/><rect x="53.4" y="63.47" width="5.1" height="1.82" fill="#71453b"/><rect x="59.0" y="63.47" width="6.0" height="1.82" fill="#5e4b47"/><rect x="65.5" y="63.47" width="6.1" height="1.82" fill="#5e4b47"/><rect x="-2.6" y="65.58" width="5.7" height="1.82" fill="#51423d"/><rect x="3.6" y="65.58" width="6.1" height="1.82" fill="#68544e"/><rect x="10.2" y="65.58" width="4.0" height="1.82" fill="#5e4b47"/><rect x="14.7" y="65.58" width="5.4" height="1.82" fill="#68544e"/><rect x="20.7" y="65.58" width="5.4" height="1.82" fill="#5e4b47"/><rect x="31.8" y="65.58" width="4.3" height="1.82" fill="#5e4b47"/><rect x="36.6" y="65.58" width="5.0" height="1.82" fill="#705d55"/><rect x="48.5" y="65.58" width="3.1" height="1.82" fill="#68544e"/><rect x="52.1" y="65.58" width="5.3" height="1.82" fill="#68544e"/><rect x="57.9" y="65.58" width="5.5" height="1.82" fill="#463834"/><rect x="63.9" y="65.58" width="3.2" height="1.82" fill="#5e4b47"/><rect x="67.6" y="65.58" width="6.0" height="1.82" fill="#5e4b47"/><rect x="0" y="7.5" width="67.75" height="10" fill="#6a625a" opacity="0.45"/><rect x="0" y="17.2" width="67.75" height="1.9" fill="#3c3430" opacity="0.7"/><ellipse cx="32.5" cy="10.3" rx="2.8" ry="1.3" fill="#a09c92" opacity="0.3"/></pattern></defs><rect width="693" height="388" fill="url(#br)"/></svg>
<div class="a" style="left:464px;top:652px;width:695px;height:1px;background:#4e4e4e"></div>
<div class="a" style="left:464px;top:653px;width:695px;height:41px;background:linear-gradient(#363636,#2a2a2a)"></div>
<div class="a" style="left:1157px;top:49px;width:3px;height:71px;background:#313131"></div>
<div class="a" style="left:1157px;top:120px;width:2px;height:532px;background:#000"></div>
<div class="a" style="left:1159px;top:120px;width:1px;height:574px;background:#353535"></div>
<div class="a" style="left:1159px;top:652px;width:1px;height:42px;background:#353535"></div>
<div class="a" style="left:1160px;top:49px;width:6px;height:647px;background:#232323"></div>
<div class="a" style="left:1163px;top:366px;width:2px;height:2px;background:#c8c8c8;box-shadow:0 5px 0 #c8c8c8,0 10px 0 #c8c8c8"></div>
<div class="a" style="left:464px;top:663px;width:125px;height:25px;border-radius:5px;background:#151515;overflow:hidden">
<div class="seg" style="left:1px;top:1px;width:30px;height:23px"></div>
<div class="seg" style="left:32px;top:1px;width:30px;height:23px"></div>
<div class="seg" style="left:63px;top:1px;width:30px;height:23px"></div>
<div class="seg on" style="left:94px;top:1px;width:30px;height:23px"></div>
</div>
<svg class="a" style="left:464px;top:663px" width="124" height="25" viewBox="0 0 124 25">
<path d="M12 5 L23 15.5 L17 15.5 L12 21Z" fill="#a5a5a5"/>
<g stroke="#a8a8a8" stroke-width="2" fill="none"><path d="M47 5V21M39 13H55"/></g>
<path d="M47 3.5L44 7H50Z M47 22.5L44 19H50Z M37.5 13L41 10V16Z M56.5 13L53 10V16Z" fill="#a8a8a8"/>
<path d="M71.5 11 A7 7 0 0 1 84.5 10" stroke="#a5a5a5" stroke-width="2.2" fill="none"/>
<path d="M84.5 15 A7 7 0 0 1 71.5 16" stroke="#a5a5a5" stroke-width="2.2" fill="none"/>
<path d="M68.5 13.5 L72 9 L75 13.5Z M81 12 L84.5 16.5 L88 12Z" fill="#a5a5a5"/>
<circle cx="109.5" cy="13.3" r="7" fill="none" stroke="#6fa8e8" stroke-width="3.2" opacity="0.6"/>
<circle cx="109.5" cy="13.3" r="7" fill="none" stroke="#eef6ff" stroke-width="1.8"/>
<circle cx="109.5" cy="13.3" r="1.6" fill="#a8d0ff"/>
<path d="M98 13.3H102.5" stroke="#8cc0f4" stroke-width="2.5" stroke-linecap="round"/>
</svg>
<div class="a" style="left:678px;top:663px;width:96px;height:25px;border-radius:4px 0 0 4px;background:#151515;overflow:hidden">
<div class="seg" style="left:1px;top:1px;width:31px;height:23px"></div>
<div class="seg" style="left:33px;top:1px;width:31px;height:23px"></div>
<div class="seg" style="left:65px;top:1px;width:40px;height:23px"></div>
<div class="a" style="left:94px;top:-25px;width:74px;height:74px;border-radius:50%;background:#2f2f2f;box-shadow:0 0 0 1px #151515"></div>
</div>
<div class="a" style="left:844px;top:663px;width:96px;height:25px;border-radius:0 4px 4px 0;background:#151515;overflow:hidden">
<div class="seg" style="left:0px;top:1px;width:31px;height:23px"></div>
<div class="seg" style="left:32px;top:1px;width:31px;height:23px"></div>
<div class="seg" style="left:64px;top:1px;width:31px;height:23px"></div>
<div class="a" style="left:-70px;top:-25px;width:74px;height:74px;border-radius:50%;background:#2f2f2f;box-shadow:0 0 0 1px #151515"></div>
</div>
<div class="a" style="left:776px;top:658px;width:66px;height:34px;border-radius:17px;background:#141414;overflow:hidden">
<div class="seg" style="left:1px;top:1px;width:33px;height:32px;border-radius:16px 0 0 16px"></div>
<div class="seg" style="left:35px;top:1px;width:30px;height:32px;border-radius:0 16px 16px 0"></div>
</div>
<svg class="a" style="left:678px;top:658px" width="264" height="34" viewBox="0 0 264 34">
<path d="M6 18 L13 12.5 V23.5Z M13 18 L20 12.5 V23.5Z" fill="#9c9c9c"/>
<path d="M44 12.5 H48.5 V14.5 H46 V21.5 H48.5 V23.5 H44Z" fill="#9c9c9c"/>
<path d="M72.5 12.5 H75 V23.5 H72.5Z M75 18 L82 12.5 V23.5Z" fill="#9c9c9c"/>
<circle cx="117" cy="16.8" r="5" fill="#bdbdbd"/>
<path d="M142.5 11.5 L152.5 17.5 L142.5 23.5Z" fill="#b0b0b0"/>
<path d="M176 12.5 L183 18 L176 23.5Z M183 12.5 H185.5 V23.5 H183Z" fill="#9c9c9c"/>
<path d="M213 12.5 H217.5 V23.5 H213 V21.5 H215.5 V14.5 H213Z" fill="#9c9c9c"/>
<path d="M239 12.5 L246 18 L239 23.5Z M246 12.5 L253 18 L246 23.5Z" fill="#9c9c9c"/>
</svg>
<div class="btn" style="left:983px;top:663px;width:128px;height:26px"></div>
<div class="a" style="left:1099px;top:664px;width:1px;height:24px;background:#2a2a2a"></div>
<div class="a" style="left:1025px;top:670px;white-space:nowrap;color:#c4c8d0;line-height:14px;letter-spacing:-0.2px">camera1</div>
<svg class="a" style="left:1101px;top:674px" width="8" height="5" viewBox="0 0 8 5"><path d="M0.5 0.5H6.5L3.5 3.5Z" fill="#8a8a8a"/></svg>
<div class="btn" style="left:1117px;top:663px;width:39px;height:26px"></div>
<svg class="a" style="left:1117px;top:663px" width="39" height="26" viewBox="0 0 39 26"><circle cx="14.5" cy="12.7" r="5.71" fill="#141414"/><rect x="12.90" y="4.30" width="3.2" height="8.40" rx="1.3" fill="#141414" transform="rotate(0 14.5 12.7)"/><rect x="12.90" y="4.30" width="3.2" height="8.40" rx="1.3" fill="#141414" transform="rotate(45 14.5 12.7)"/><rect x="12.90" y="4.30" width="3.2" height="8.40" rx="1.3" fill="#141414" transform="rotate(90 14.5 12.7)"/><rect x="12.90" y="4.30" width="3.2" height="8.40" rx="1.3" fill="#141414" transform="rotate(135 14.5 12.7)"/><rect x="12.90" y="4.30" width="3.2" height="8.40" rx="1.3" fill="#141414" transform="rotate(180 14.5 12.7)"/><rect x="12.90" y="4.30" width="3.2" height="8.40" rx="1.3" fill="#141414" transform="rotate(225 14.5 12.7)"/><rect x="12.90" y="4.30" width="3.2" height="8.40" rx="1.3" fill="#141414" transform="rotate(270 14.5 12.7)"/><rect x="12.90" y="4.30" width="3.2" height="8.40" rx="1.3" fill="#141414" transform="rotate(315 14.5 12.7)"/><circle cx="14.5" cy="13.5" r="5.71" fill="#acacac"/><rect x="12.90" y="5.10" width="3.2" height="8.40" rx="1.3" fill="#acacac" transform="rotate(0 14.5 13.5)"/><rect x="12.90" y="5.10" width="3.2" height="8.40" rx="1.3" fill="#acacac" transform="rotate(45 14.5 13.5)"/><rect x="12.90" y="5.10" width="3.2" height="8.40" rx="1.3" fill="#acacac" transform="rotate(90 14.5 13.5)"/><rect x="12.90" y="5.10" width="3.2" height="8.40" rx="1.3" fill="#acacac" transform="rotate(135 14.5 13.5)"/><rect x="12.90" y="5.10" width="3.2" height="8.40" rx="1.3" fill="#acacac" transform="rotate(180 14.5 13.5)"/><rect x="12.90" y="5.10" width="3.2" height="8.40" rx="1.3" fill="#acacac" transform="rotate(225 14.5 13.5)"/><rect x="12.90" y="5.10" width="3.2" height="8.40" rx="1.3" fill="#acacac" transform="rotate(270 14.5 13.5)"/><rect x="12.90" y="5.10" width="3.2" height="8.40" rx="1.3" fill="#acacac" transform="rotate(315 14.5 13.5)"/><circle cx="14.5" cy="13.5" r="2.27" fill="#454545"/><path d="M30 11.5H35" stroke="#151515" stroke-width="1"/><path d="M30 12H35L32.5 15Z" fill="#707070"/></svg>
<div class="a" style="left:0px;top:694px;width:453px;height:2px;background:#363636"></div>
<div class="a" style="left:461px;top:694px;width:699px;height:2px;background:#363636"></div>
<div class="a" style="left:3px;top:696px;width:1163px;height:8px;background:linear-gradient(#232323,#1e1e1e 70%,#191919)"></div>
<div class="a" style="left:0px;top:704px;width:1166px;height:1px;background:#303030"></div>
<div class="a" style="left:0px;top:705px;width:6px;height:32px;background:#2d2d2d"></div>
<div class="a" style="left:6px;top:705px;width:1160px;height:32px;background:#262626"></div>
<div class="tab" style="left:10px;top:710px;width:132px;height:27px;line-height:27px">Timeline</div>
<div class="a" style="left:957px;top:699px;width:2px;height:2px;background:#aaa;box-shadow:4px 0 0 #aaa,8px 0 0 #aaa"></div>
<div class="a" style="left:0px;top:737px;width:1166px;height:27px;background:#353535"></div>
<div class="a" style="left:7px;top:743px;width:95px;height:30px;border-radius:4px;background:#151515;overflow:hidden">
<div class="seg" style="left:1px;top:1px;width:31px;height:28px"></div>
<div class="seg on" style="left:33px;top:1px;width:31px;height:28px;background:linear-gradient(#303030,#262626)"></div>
<div class="seg" style="left:65px;top:1px;width:29px;height:28px"></div>
</div>
<svg class="a" style="left:7px;top:743px" width="95" height="22" viewBox="0 0 95 22">
<rect x="8.5" y="4.5" width="17" height="20" fill="#e0a232" stroke="#c88a1e" stroke-width="1"/>
<rect x="10.5" y="10.5" width="13" height="5" fill="#3c3a36" stroke="#f0b848" stroke-width="1"/>
<g fill="#6a5020"><circle cx="11.6" cy="7.6" r="1"/><circle cx="14.3" cy="7.6" r="1"/><circle cx="17" cy="7.6" r="1"/><circle cx="19.7" cy="7.6" r="1"/><circle cx="22.4" cy="7.6" r="1"/>
<circle cx="11.6" cy="18.6" r="1"/><circle cx="14.3" cy="18.6" r="1"/><circle cx="17" cy="18.6" r="1"/><circle cx="19.7" cy="18.6" r="1"/><circle cx="22.4" cy="18.6" r="1"/></g>
<defs><linearGradient id="tg" x1="0" y1="0" x2="1" y2="0"><stop offset="0" stop-color="#707070"/><stop offset="1" stop-color="#c8c8c8"/></linearGradient>
<linearGradient id="tg2" x1="1" y1="0" x2="0" y2="0"><stop offset="0" stop-color="#707070"/><stop offset="1" stop-color="#c8c8c8"/></linearGradient></defs>
<path d="M38 13.5 L45 8.5 V18.5Z" fill="url(#tg)" stroke="#3a88dc" stroke-width="1"/>
<path d="M61 13.5 L54 8.5 V18.5Z" fill="url(#tg2)" stroke="#3a88dc" stroke-width="1"/>
<rect x="45.5" y="6.5" width="9" height="20" fill="#d6e4f2" stroke="#4a94e4" stroke-width="1.3"/>
<path d="M71 12 H75.5 L78 6.5 L81.6 18.7 L83.2 12 H87" fill="none" stroke="#bdbdbd" stroke-width="1.7" stroke-linejoin="bevel"/>
</svg>
<div class="btn" style="left:134px;top:743px;width:39px;height:30px"></div>
<div class="a" style="left:161px;top:744px;width:1px;height:20px;background:#2a2a2a"></div>
<svg class="a" style="left:134px;top:743px" width="39" height="22" viewBox="0 0 39 22"><defs><linearGradient id="kg" x1="0" y1="0" x2="0" y2="1"><stop offset="0" stop-color="#c4c4c4"/><stop offset="1" stop-color="#8a8a8a"/></linearGradient></defs><path d="M14 5 H22 V9.5 Q21.5 11.5 18 14 Q14.5 11.5 14 9.5Z" fill="url(#kg)"/><path d="M14.5 4.6H21.5" stroke="#111" stroke-width="1.4"/>
<path d="M12 12V22M7.5 17H16.5" stroke="#c6c6c6" stroke-width="2"/><path d="M30 11H36L33 14Z" fill="#777"/></svg>
<div class="btn" style="left:179px;top:743px;width:32px;height:30px"></div>
<svg class="a" style="left:179px;top:743px" width="32" height="22" viewBox="0 0 32 22"><path d="M7 4H15V8L12 12L15 16V22H7V16L10 12L7 8Z" fill="#a8a8a8"/><path d="M7 3H15" stroke="#111" stroke-width="1.5"/>
<path d="M12 12 L20 6.5 V20Z" fill="#7a7a7a"/><rect x="20" y="6" width="4" height="16" fill="#b0b0b0"/><path d="M20 6H24" stroke="#111" stroke-width="1.5"/></svg>
<div class="btn" style="left:216px;top:743px;width:100px;height:30px"></div>
<div class="a" style="left:302px;top:744px;width:1px;height:20px;background:#2a2a2a"></div>
<div class="a" style="left:216px;top:749px;white-space:nowrap;width:98px;text-align:center;color:#c4c8d0;line-height:14px;font-size:11.5px">Transform</div>
<svg class="a" style="left:305px;top:754px" width="8" height="5" viewBox="0 0 8 5"><path d="M0.5 0.5H6.5L3.5 3.5Z" fill="#8a8a8a"/></svg>
</div>
</body></html>
